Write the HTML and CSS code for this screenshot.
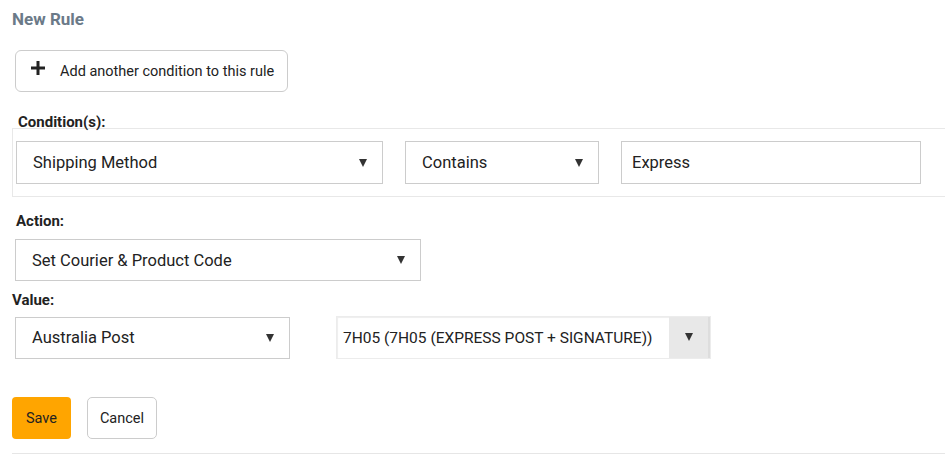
FILE: index.html
```html
<!DOCTYPE html>
<html>
<head>
    <meta charset="utf-8" />
    <title>New Rule</title>
    <link rel="stylesheet" href="styles.css">
</head>
<body>
    <div class="rule">
        <h3 class="cim">New Rule</h3>

        <button class="gomb gomb-add">
            <svg width="14" height="14" viewBox="0 0 14 14"><path d="M5.5 0h3v5.5H14v3H8.5V14h-3V8.5H0v-3h5.5z" fill="#222"/></svg>
            <span>Add another condition to this rule</span>
        </button>

        <label class="cimke cimke-cond">Condition(s):</label>
        <div class="feltetel">
            <div class="valaszto w-field">Shipping Method<span class="nyil"></span></div>
            <div class="valaszto w-op">Contains<span class="nyil"></span></div>
            <div class="mezo">Express</div>
        </div>

        <label class="cimke cimke-action">Action:</label>
        <div class="valaszto w-action">Set Courier &amp; Product Code<span class="nyil"></span></div>

        <label class="cimke cimke-value">Value:</label>
        <div class="sor">
            <div class="valaszto w-courier">Australia Post<span class="nyil"></span></div>
            <div class="kod">
                <span class="kod-szoveg">7H05 (7H05 (EXPRESS POST + SIGNATURE))</span>
                <span class="kod-nyil"><span class="nyil-kicsi"></span></span>
            </div>
        </div>

        <div class="gombok">
            <button class="gomb gomb-save">Save</button>
            <button class="gomb gomb-cancel">Cancel</button>
        </div>
        <div class="vonal"></div>
    </div>
</body>
</html>
```

FILE: styles.css
```css
* {
    margin: 0;
    padding: 0;
    box-sizing: border-box;
}

body {
    font-family: Roboto, "Liberation Sans", sans-serif;
    color: #222;
    background: #fff;
}

.rule {
    padding: 9px 0 0 12px;
}

.cim {
    font-size: 17px;
    font-weight: bold;
    color: #6b7a88;
    height: 21px;
}

.gomb {
    font-family: inherit;
    background: #fff;
    border: 1px solid #ccc;
    border-radius: 6px;
    color: #222;
    cursor: pointer;
}

.gomb-add {
    display: flex;
    align-items: center;
    margin: 20px 0 0 3px;
    width: 273px;
    height: 42px;
    padding-left: 15px;
    font-size: 14.5px;
}

    .gomb-add svg {
        margin-top: -6px;
    }

    .gomb-add span {
        margin-left: 15px;
    }

.cimke {
    display: block;
    font-size: 15px;
    font-weight: bold;
    color: #222;
}

.cimke-cond {
    margin: 21px 0 0 6px;
    height: 15px;
}

.feltetel {
    display: flex;
    gap: 22px;
    border: 1px solid #e8e8e8;
    border-right: none;
    padding: 12px 0 12px 3px;
}

.valaszto {
    position: relative;
    display: flex;
    align-items: center;
    height: 43px;
    border: 1px solid #ccc;
    padding-left: 16px;
    font-size: 16.5px;
    color: #222;
}

.nyil {
    position: absolute;
    right: 15px;
    top: 50%;
    margin-top: -4px;
    width: 0;
    height: 0;
    border-left: 4.5px solid transparent;
    border-right: 4.5px solid transparent;
    border-top: 8px solid #333;
}

.w-field {
    width: 367px;
}

.w-op {
    width: 194px;
}

.mezo {
    display: flex;
    align-items: center;
    width: 300px;
    height: 43px;
    border: 1px solid #ccc;
    padding-left: 10px;
    font-size: 16.5px;
}

.cimke-action {
    margin: 15px 0 0 4px;
    height: 27px;
}

.w-action {
    width: 406px;
    margin-left: 3px;
    height: 42px;
}

.cimke-value {
    margin-top: 10px;
    height: 25px;
}

.sor {
    display: flex;
    align-items: center;
    gap: 46px;
    margin-left: 3px;
}

.w-courier {
    width: 275px;
    height: 42px;
}

.kod {
    display: flex;
    width: 375px;
    height: 43px;
    border: 1px solid #ececec;
    box-shadow: inset 1px 1px 1px #eee;
    font-size: 15.5px;
}

.kod-szoveg {
    flex: 1;
    display: flex;
    align-items: center;
    padding-left: 6px;
    color: #222;
}

.kod-nyil {
    width: 41px;
    display: flex;
    align-items: center;
    justify-content: center;
    background: #e8e8e8;
    border-right: 2px solid #ddd;
}

.nyil-kicsi {
    width: 0;
    height: 0;
    border-left: 4.5px solid transparent;
    border-right: 4.5px solid transparent;
    border-top: 8px solid #333;
    margin-top: -2px;
}

.gombok {
    display: flex;
    gap: 16px;
    margin-top: 38px;
}

.gomb-save {
    width: 59px;
    height: 42px;
    background: #ffa500;
    border: none;
    border-radius: 4px;
    font-size: 14.5px;
}

.gomb-cancel {
    width: 70px;
    height: 42px;
    border-radius: 5px;
    font-size: 14.5px;
}

.vonal {
    margin-top: 14px;
    border-top: 1px solid #e6e6e6;
}
```
